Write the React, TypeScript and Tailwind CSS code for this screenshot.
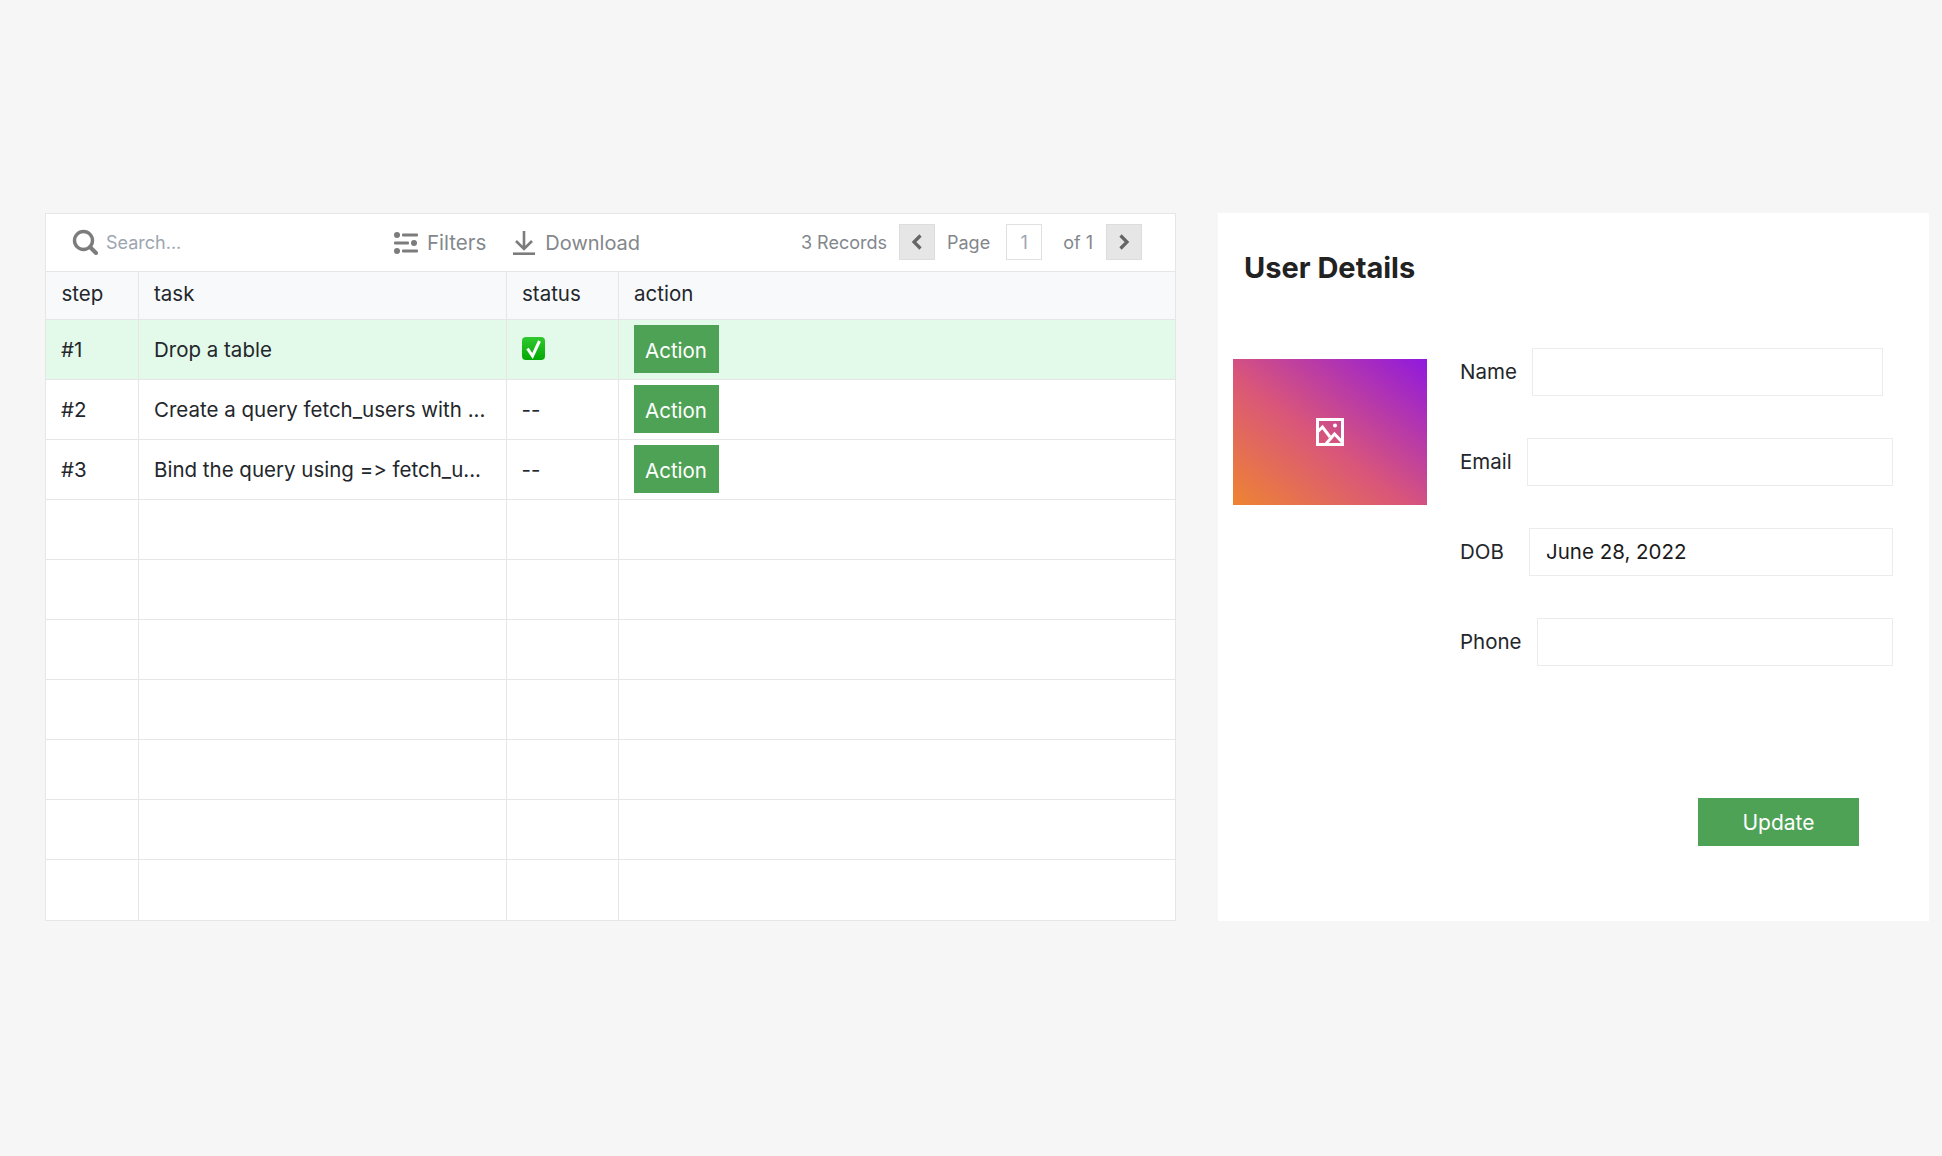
import React from 'react';

const rows = [
  { step: '#1', task: 'Drop a table', status: 'done' },
  { step: '#2', task: 'Create a query fetch_users with ...', status: '--' },
  { step: '#3', task: 'Bind the query using => fetch_u...', status: '--' },
  { step: '', task: '', status: '' },
  { step: '', task: '', status: '' },
  { step: '', task: '', status: '' },
  { step: '', task: '', status: '' },
  { step: '', task: '', status: '' },
  { step: '', task: '', status: '' },
  { step: '', task: '', status: '' },
];

const SearchIcon = () => (
  <svg width="26" height="26" viewBox="0 0 26 26" fill="none" stroke="#7c7c7c" strokeWidth="3.4">
    <circle cx="11.5" cy="11.5" r="9" />
    <path d="M18 18l6 6" strokeLinecap="round" strokeWidth="4" />
  </svg>
);

const FilterIcon = () => (
  <svg width="24" height="22" viewBox="0 0 24 22" fill="#7c7c7c">
    <circle cx="3" cy="3" r="3" />
    <rect x="8" y="1.6" width="16" height="2.8" rx="1" />
    <rect x="0" y="9.6" width="15" height="2.8" rx="1" />
    <circle cx="20" cy="11" r="3" />
    <circle cx="3" cy="19" r="3" />
    <rect x="8" y="17.6" width="16" height="2.8" rx="1" />
  </svg>
);

const DownloadIcon = () => (
  <svg width="24" height="24" viewBox="0 0 24 24" fill="none" stroke="#7c7c7c" strokeWidth="2.6">
    <path d="M12 0v17M4 10l8 8 8-8" />
    <path d="M1 22.7h22" strokeWidth="2.6" />
  </svg>
);

const Chevron = ({ dir }: { dir: 'left' | 'right' }) => (
  <svg width="12" height="16" viewBox="0 0 12 16" fill="none" stroke="#666666" strokeWidth="3.2">
    <path d={dir === 'left' ? 'M9.5 1.5L3 8l6.5 6.5' : 'M2.5 1.5L9 8l-6.5 6.5'} />
  </svg>
);

const CheckBox = () => (
  <svg width="23" height="23" viewBox="0 0 23 23" className="block -mt-[2px]">
    <defs>
      <linearGradient id="chk" x1="0" y1="0" x2="0" y2="1">
        <stop offset="0" stopColor="#2fc92f" />
        <stop offset="1" stopColor="#04a804" />
      </linearGradient>
    </defs>
    <rect width="23" height="23" rx="4" fill="url(#chk)" />
    <path d="M5.5 11.5l5 7.5 7-15" fill="none" stroke="#ffffff" strokeWidth="3" />
  </svg>
);

const ImageIcon = () => (
  <svg width="28" height="28" viewBox="0 0 28 28" fill="none" stroke="#ffffff" strokeWidth="3">
    <rect x="1.5" y="1.5" width="25" height="25" />
    <path d="M1.5 14l5-5 7.5 10" />
    <path d="M9 27l9.5-11 8.5 9" />
    <circle cx="19" cy="7.5" r="2" fill="#ffffff" stroke="none" />
  </svg>
);

const Field = ({ label, value, className, labelClass }: { label: string; value?: string; className?: string; labelClass?: string }) => (
  <div className={`flex items-center ${className || ''}`}>
    <label className={`text-[20.5px] text-[#23272b] ${labelClass || 'mr-[15px]'}`}>{label}</label>
    <div className="flex-1 h-[48px] flex items-center px-[16px] bg-white border border-[#ececec] text-[20.5px] text-[#1b1b1b]">
      {value}
    </div>
  </div>
);

const App: React.FC = () => {
  return (
    <div className="min-h-screen bg-[#f6f6f6] pt-[213px] pl-[45px] pr-[13px] flex gap-[42px] font-['Inter',sans-serif] [font-variant-ligatures:none] [font-feature-settings:'calt'_0]">
      <div className="w-[1131px] h-[708px] bg-white border border-[#e6e6e6] flex flex-col">
        <div className="h-[57px] shrink-0 flex items-center pl-[26px] pr-[33px]">
          <div className="w-[322px] flex items-center gap-[8px] -mt-[1px]">
            <SearchIcon />
            <span className="text-[18px] text-[#9ca6b0]">Search...</span>
          </div>
          <div className="flex items-center gap-[9px] text-[20.5px] text-[#83878c]">
            <FilterIcon />
            <span className="pt-[1px]">Filters</span>
          </div>
          <div className="ml-[26px] flex items-center gap-[9px] text-[20px] text-[#83878c]">
            <DownloadIcon />
            <span className="pt-[1px]">Download</span>
          </div>
          <div className="ml-auto flex items-center text-[18px] text-[#83878c] -mt-[1px]">
            <span>3 Records</span>
            <button className="ml-[12px] w-[36px] h-[36px] bg-[#e6e6e6] border border-[#dddddd] flex items-center justify-center">
              <Chevron dir="left" />
            </button>
            <span className="ml-[12px]">Page</span>
            <div className="ml-[16px] w-[36px] h-[36px] border border-[#e0e0e0] flex items-center justify-center text-[#9ca6b0]">1</div>
            <span className="ml-[21px]">of 1</span>
            <button className="ml-[13px] w-[36px] h-[36px] bg-[#e6e6e6] border border-[#dddddd] flex items-center justify-center">
              <Chevron dir="right" />
            </button>
          </div>
        </div>
        <table className="w-full table-fixed border-collapse text-[20.5px] text-[#23272b]">
          <colgroup>
            <col className="w-[92px]" />
            <col className="w-[368px]" />
            <col className="w-[112px]" />
            <col />
          </colgroup>
          <thead>
            <tr className="h-[48px] bg-[#f8f9fa]">
              {['step', 'task', 'status', 'action'].map((h, i) => (
                <th key={h} className={`font-normal text-left pl-[15.5px] pr-[15px] pb-[2px] border-y border-[#e6e6e6] ${i > 0 ? 'border-l' : ''}`}>
                  {h}
                </th>
              ))}
            </tr>
          </thead>
          <tbody>
            {rows.map((r, i) => (
              <tr key={i} className={`${i === rows.length - 1 ? 'h-[61px]' : 'h-[60px]'} ${i === 0 ? 'bg-[#e3f9ea]' : ''}`}>
                <td className="px-[15px] pt-[2px] border-b border-[#e6e6e6]">{r.step}</td>
                <td className="pl-[15.5px] pr-[15px] pt-[2px] border-b border-l border-[#e6e6e6] whitespace-nowrap">{r.task}</td>
                <td className="px-[15px] border-b border-l border-[#e6e6e6]">
                  {r.status === 'done' ? <CheckBox /> : <span className="relative top-[1px]">{r.status}</span>}
                </td>
                <td className="px-[15px] border-b border-l border-[#e6e6e6]">
                  {r.step && (
                    <button className="w-[85px] h-[48px] -mt-[1px] pt-[4px] bg-[#4ea256] text-white text-[20.5px] flex items-center justify-center">
                      Action
                    </button>
                  )}
                </td>
              </tr>
            ))}
          </tbody>
        </table>
      </div>

      <div className="flex-1 h-[708px] bg-white flex flex-col">
        <h1 className="mt-[38px] ml-[26px] text-[29px] leading-[34px] font-bold text-[#222222]">User Details</h1>
        <div className="flex pl-[15px] pr-[36px] mt-[63px]">
          <div className="mt-[11px] w-[194px] h-[146px] shrink-0 bg-[linear-gradient(to_top_right,#ee8432,#d9567a_45%,#9019de)] flex items-center justify-center">
            <ImageIcon />
          </div>
          <div className="ml-[33px] flex-1 flex flex-col">
            <Field label="Name" className="mr-[10px]" />
            <Field label="Email" className="mt-[42px]" />
            <Field label="DOB" labelClass="w-[69px]" value="June 28, 2022" className="mt-[42px]" />
            <Field label="Phone" className="mt-[42px]" />
            <div className="mt-[132px] flex justify-end pr-[34px]">
              <button className="w-[161px] h-[48px] pt-[1px] bg-[#4ea256] text-white text-[21px]">Update</button>
            </div>
          </div>
        </div>
      </div>
    </div>
  );
};

export default App;
